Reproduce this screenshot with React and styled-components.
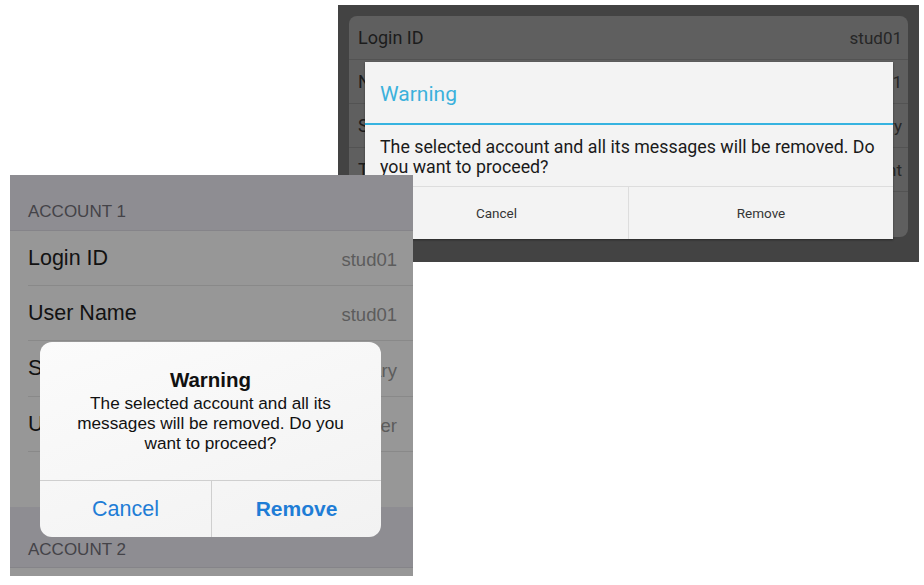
import React from 'react';
import styled, { createGlobalStyle } from 'styled-components';

const GlobalStyle = createGlobalStyle`
    html, body {
        margin: 0;
        padding: 0;
        background: #ffffff;
    }
`;

const Canvas = styled('div')`
    position: relative;
    width: 924px;
    height: 585px;
    overflow: hidden;
    background: #ffffff;
`;

/* ---------- Android screenshot ---------- */

const AndroidShot = styled('div')`
    position: absolute;
    left: 338px;
    top: 5px;
    width: 581px;
    height: 257px;
    box-sizing: border-box;
    padding: 11px;
    background: #434343;
    font-family: Roboto, "Noto Sans", sans-serif;
`;

const AndroidCard = styled('div')`
    display: flex;
    flex-direction: column;
    height: 221px;
    background: #5f5f5f;
    border-radius: 8px;
    overflow: hidden;
`;

const AndroidRow = styled('div')`
    display: flex;
    align-items: center;
    justify-content: space-between;
    height: 44px;
    flex-shrink: 0;
    box-sizing: border-box;
    padding: 0 6px 0 9px;
    border-bottom: ${(props) => props.last ? 'none' : '1px solid #535353'};
`;

const AndroidLabel = styled('span')`
    font-size: 18px;
    color: #1c1c1c;
`;

const AndroidValue = styled('span')`
    font-size: 17px;
    color: #262626;
`;

const AndroidDialog = styled('div')`
    position: absolute;
    left: 27px;
    top: 57px;
    width: 528px;
    display: flex;
    flex-direction: column;
    background: #f3f3f3;
    box-shadow: 0 1px 2px rgba(0, 0, 0, 0.4);
`;

const AndroidTitle = styled('div')`
    display: flex;
    align-items: center;
    height: 63px;
    padding: 2px 15px 0;
    box-sizing: border-box;
    font-size: 21px;
    color: #3bb1dc;
    border-bottom: 2px solid #36b3e0;
`;

const AndroidMessage = styled('div')`
    padding: 12px 15px 9px;
    font-size: 17.8px;
    line-height: 20px;
    color: #1a1a1a;
    white-space: nowrap;
`;

const AndroidButtons = styled('div')`
    display: grid;
    grid-template-columns: 263px 1fr;
    height: 52px;
    border-top: 1px solid #dddddd;
`;

const AndroidButton = styled('div')`
    display: flex;
    align-items: center;
    justify-content: center;
    font-size: 13.5px;
    color: #353535;
    border-left: ${(props) => props.divided ? '1px solid #dddddd' : 'none'};
`;

/* ---------- iOS screenshot ---------- */

const IosShot = styled('div')`
    position: absolute;
    left: 10px;
    top: 175px;
    width: 403px;
    height: 401px;
    display: flex;
    flex-direction: column;
    overflow: hidden;
    background: #8e8d92;
    font-family: "Liberation Sans", Arial, sans-serif;
`;

const IosHeader = styled('div')`
    display: flex;
    align-items: flex-end;
    height: ${(props) => props.h}px;
    flex-shrink: 0;
    box-sizing: border-box;
    padding: 0 18px ${(props) => props.pb}px;
    font-size: 17px;
    line-height: 18px;
    color: #444348;
    background: #8e8d92;
    border-bottom: 1px solid #858489;
`;

const IosRow = styled('div')`
    height: ${(props) => props.h || 55}px;
    flex-shrink: 0;
    padding-left: 18px;
    background: #979797;
`;

const IosRowInner = styled('div')`
    display: flex;
    align-items: center;
    justify-content: space-between;
    height: 100%;
    box-sizing: border-box;
    padding-right: 16px;
    border-bottom: ${(props) => props.last ? 'none' : '1px solid #898989'};
`;

const IosLabel = styled('span')`
    font-size: 21.5px;
    color: #121212;
`;

const IosValue = styled('span')`
    font-size: 18.5px;
    color: #5c5c5c;
    margin-top: 4px;
`;

const IosAlert = styled('div')`
    position: absolute;
    left: 30px;
    top: 167px;
    width: 341px;
    height: 195px;
    display: flex;
    flex-direction: column;
    border-radius: 12px;
    overflow: hidden;
    background: linear-gradient(160deg, #fbfbfb 0%, #f2f2f2 100%);
`;

const IosAlertBody = styled('div')`
    flex: 1;
    display: flex;
    flex-direction: column;
    align-items: center;
    padding-top: 26px;
    text-align: center;
    color: #111111;
`;

const IosAlertTitle = styled('div')`
    font-size: 20.5px;
    font-weight: 600;
    line-height: 24px;
    margin-bottom: 1px;
`;

const IosAlertMessage = styled('div')`
    font-size: 17.2px;
    line-height: 20px;
`;

const IosButtons = styled('div')`
    display: grid;
    grid-template-columns: 171px 1fr;
    height: 56px;
    flex-shrink: 0;
    border-top: 1px solid #cfcfcf;
`;

const IosButton = styled('div')`
    display: flex;
    align-items: center;
    justify-content: center;
    font-size: ${(props) => props.strong ? 21 : 21.5}px;
    color: #1f7dd6;
    font-weight: ${(props) => props.strong ? 700 : 400};
    border-left: ${(props) => props.divided ? '1px solid #cfcfcf' : 'none'};
`;

const androidRows = [
    { label: 'Login ID', value: 'stud01' },
    { label: 'Name', value: 'stud01' },
    { label: 'Server', value: 'Primary' },
    { label: 'Type', value: 'Student' },
    { label: '', value: '' },
];

const iosRows = [
    { label: 'Login ID', value: 'stud01' },
    { label: 'User Name', value: 'stud01' },
    { label: 'Server', value: 'Primary' },
    { label: 'User Type', value: 'Teacher' },
    { label: '', value: '' },
];

function AndroidScreen() {
    return (
        <AndroidShot>
            <AndroidCard>
                {androidRows.map((row, i) => (
                    <AndroidRow key={i} last={i === androidRows.length - 1}>
                        <AndroidLabel>{row.label}</AndroidLabel>
                        <AndroidValue>{row.value}</AndroidValue>
                    </AndroidRow>
                ))}
            </AndroidCard>
            <AndroidDialog>
                <AndroidTitle>Warning</AndroidTitle>
                <AndroidMessage>
                    The selected account and all its messages will be removed. Do<br />
                    you want to proceed?
                </AndroidMessage>
                <AndroidButtons>
                    <AndroidButton>Cancel</AndroidButton>
                    <AndroidButton divided>Remove</AndroidButton>
                </AndroidButtons>
            </AndroidDialog>
        </AndroidShot>
    );
}

function IosScreen() {
    return (
        <IosShot>
            <IosHeader h={56} pb={9}>ACCOUNT 1</IosHeader>
            {iosRows.map((row, i) => (
                <IosRow key={i} h={i === 2 ? 56 : 55}>
                    <IosRowInner last={i === iosRows.length - 1}>
                        <IosLabel>{row.label}</IosLabel>
                        <IosValue>{row.value}</IosValue>
                    </IosRowInner>
                </IosRow>
            ))}
            <IosHeader h={61} pb={8}>ACCOUNT 2</IosHeader>
            <IosRow h={10} />
            <IosAlert>
                <IosAlertBody>
                    <IosAlertTitle>Warning</IosAlertTitle>
                    <IosAlertMessage>
                        The selected account and all its<br />
                        messages will be removed. Do you<br />
                        want to proceed?
                    </IosAlertMessage>
                </IosAlertBody>
                <IosButtons>
                    <IosButton>Cancel</IosButton>
                    <IosButton divided strong>Remove</IosButton>
                </IosButtons>
            </IosAlert>
        </IosShot>
    );
}

export default function App() {
    return (
        <Canvas>
            <GlobalStyle />
            <AndroidScreen />
            <IosScreen />
        </Canvas>
    );
}
